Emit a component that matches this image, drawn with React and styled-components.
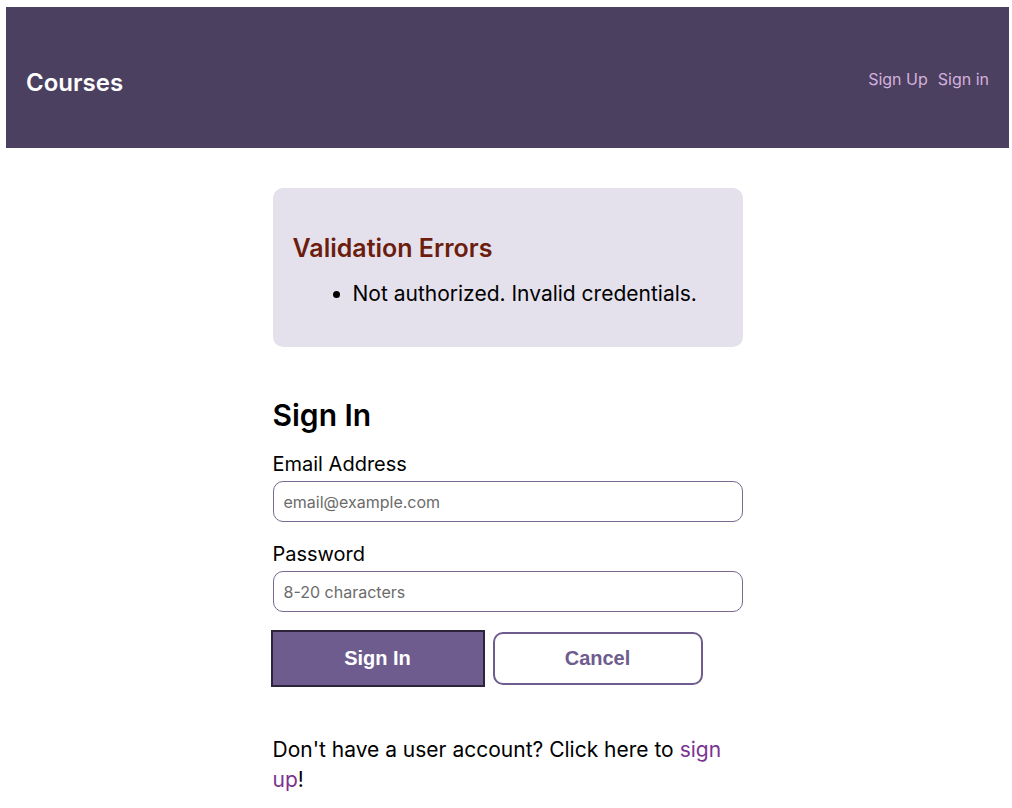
import React from "react";
import styled, { createGlobalStyle } from "styled-components";

const GlobalStyle = createGlobalStyle`
  *, *::before, *::after { box-sizing: border-box; }
  body {
    margin: 7px 3px 0 6px;
    background: #fff;
    color: #000;
    font: 400 21px/30px Inter, "Liberation Sans", sans-serif;
  }
  a { text-decoration: none; }
`;

const Header = styled.header`
  display: flex;
  justify-content: space-between;
  align-items: flex-start;
  padding: 60px 20px 50px;
  background: #4c4060;
`;

const Brand = styled.h1`
  margin: 0;
  font-size: 24px;
  line-height: 31px;
  font-weight: 600;
  a { color: #fff; }
`;

const Nav = styled.nav`
  display: flex;
  gap: 10px;
  font-size: 16px;
  line-height: 24px;
`;

const NavLink = styled.a`
  color: #d3b1dd;
`;

const Main = styled.main`
  width: 100%;
  max-width: 470px;
  margin: 40px auto 0;
`;

const ErrorPanel = styled.section`
  padding: 45px 20px 38px;
  border-radius: 10px;
  background: #e5e1ec;
`;

const ErrorTitle = styled.h3`
  margin: 0 0 16px;
  font-size: 25px;
  line-height: 30px;
  font-weight: 600;
  color: #6b1d0e;
`;

const ErrorList = styled.ul`
  margin: 0;
  padding-left: 60px;
`;

const Title = styled.h2`
  margin: 50px 0 16px;
  font-size: 30px;
  line-height: 36px;
  font-weight: 600;
`;

const Field = styled.div`
  display: flex;
  flex-direction: column;
  gap: 2px;
  margin-bottom: 17px;
`;

const Label = styled.label`
  font-size: 20px;
`;

const Input = styled.input`
  width: 100%;
  height: 41px;
  padding: 0 10px;
  border: 1px solid #78698f;
  border-radius: 10px;
  background: #fff;
  font: inherit;
  font-size: 16px;
  &::placeholder { color: #6b6b6b; opacity: 1; }
`;

const Actions = styled.div`
  display: flex;
  gap: 10px;
  margin-top: 20px;
`;

const Button = styled.button`
  width: 210px;
  height: 53px;
  padding: 0 0 2px;
  border: 2px solid #6e5c8e;
  border-radius: ${({ $primary }) => ($primary ? "0" : "10px")};
  outline: ${({ $primary }) => ($primary ? "2px solid #2d243c" : "none")};
  background: ${({ $primary }) => ($primary ? "#6e5c8e" : "#fff")};
  color: ${({ $primary }) => ($primary ? "#fff" : "#6e5c8e")};
  font: 700 20px/24px "Liberation Sans", Arial, sans-serif;
  cursor: pointer;
`;

const Prompt = styled.p`
  margin: 50px 0 0;
  padding-right: 20px;
  a { color: #7b3290; }
`;

export default function App() {
  return (
    <>
      <GlobalStyle />
      <Header>
        <Brand><a href="#courses">Courses</a></Brand>
        <Nav>
          <NavLink href="#signup">Sign Up</NavLink>
          <NavLink href="#signin">Sign in</NavLink>
        </Nav>
      </Header>
      <Main>
        <ErrorPanel>
          <ErrorTitle>Validation Errors</ErrorTitle>
          <ErrorList>
            <li>Not authorized. Invalid credentials.</li>
          </ErrorList>
        </ErrorPanel>
        <Title>Sign In</Title>
        <form onSubmit={(e) => e.preventDefault()}>
          <Field>
            <Label htmlFor="email">Email Address</Label>
            <Input id="email" type="email" placeholder="email@example.com" />
          </Field>
          <Field>
            <Label htmlFor="password">Password</Label>
            <Input id="password" type="password" placeholder="8-20 characters" />
          </Field>
          <Actions>
            <Button type="submit" $primary>Sign In</Button>
            <Button type="button">Cancel</Button>
          </Actions>
        </form>
        <Prompt>
          Don't have a user account? Click here to <a href="#signup">sign up</a>!
        </Prompt>
      </Main>
    </>
  );
}
